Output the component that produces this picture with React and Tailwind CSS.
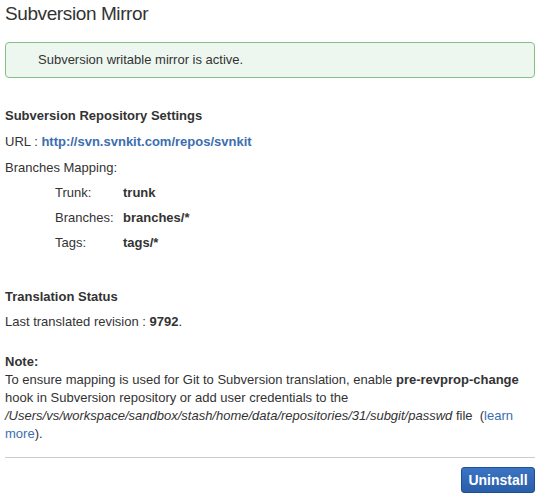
export default function App() {
  return (
    <div className="min-h-[497px] bg-white px-[5px] pr-[4px] text-[13px] leading-[18px] text-[#333] font-['Liberation_Sans',Arial,sans-serif]">
      <h1 className="pt-[1px] text-[19px] leading-[26px] tracking-[-0.4px] font-normal text-[#333]">Subversion Mirror</h1>

      <div className="mt-[15px] rounded-[4px] border border-[#83c083] bg-[#eef7ef] py-[8px] pl-[32px]">
        Subversion writable mirror is active.
      </div>

      <div className="mt-[29px] font-bold">Subversion Repository Settings</div>
      <div className="mt-[8px]">
        URL :{" "}
        <a href="#" className="font-bold text-[#3b6eb0]">
          http://svn.svnkit.com/repos/svnkit
        </a>
      </div>
      <div className="mt-[8px]">Branches Mapping:</div>
      <div className="flex flex-col gap-[7px] pt-[7px] pl-[50px]">
        <div className="flex">
          <span className="w-[68px]">Trunk:</span>
          <span className="font-bold">trunk</span>
        </div>
        <div className="flex">
          <span className="w-[68px]">Branches:</span>
          <span className="font-bold">branches/*</span>
        </div>
        <div className="flex">
          <span className="w-[68px]">Tags:</span>
          <span className="font-bold">tags/*</span>
        </div>
      </div>

      <div className="mt-[36px] font-bold">Translation Status</div>
      <div className="mt-[7px]">
        Last translated revision : <b>9792</b>.
      </div>

      <div className="mt-[22px] font-bold">Note:</div>
      <p className="whitespace-nowrap">
        To ensure mapping is used for Git to Subversion translation, enable <b>pre-revprop-change</b>
        <br />
        hook in Subversion repository or add user credentials to the
        <br />
        <i>/Users/vs/workspace/sandbox/stash/home/data/repositories/31/subgit/passwd</i> file{"\u00a0\u00a0"}(
        <a href="#" className="text-[#3b6eb0]">
          learn
        </a>
        <br />
        <a href="#" className="text-[#3b6eb0]">
          more
        </a>
        ).
      </p>

      <hr className="mt-[14px] border-0 border-t border-[#cccccc]" />

      <div className="mt-[9px] flex justify-end">
        <button className="h-[26px] w-[74px] rounded-[3px] border border-[#1d4f93] bg-gradient-to-b from-[#3b74c4] to-[#2a5ea8] text-[14px] font-bold text-white">
          Uninstall
        </button>
      </div>
    </div>
  );
}
